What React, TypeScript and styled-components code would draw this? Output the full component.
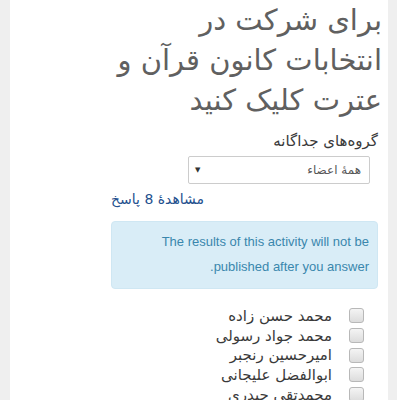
import React from "react";
import styled, { createGlobalStyle } from "styled-components";

const Global = createGlobalStyle`
  html, body {
    margin: 0;
    padding: 0;
    background: #efefef;
  }
  body {
    font-family: "DejaVu Sans", "Liberation Sans", sans-serif;
  }
`;

const Page = styled.div`
  margin: 0 9px 0 10px;
  min-height: 400px;
  background: #ffffff;
  direction: rtl;
  overflow: hidden;
`;

const Title = styled.h2`
  margin: 0;
  padding: 0 6px 0 0;
  font-family: "DejaVu Sans", sans-serif;
  font-weight: normal;
  font-size: 29px;
  line-height: 40px;
  color: #606060;
  text-align: right;
`;

const Body = styled.div`
  padding: 10px 10px 0 101px;
`;

const GroupLabel = styled.div`
  font-size: 15px;
  line-height: 22px;
  color: #3a3a3a;
`;

const SelectBox = styled.div`
  margin: 4px 8px 0 0;
  width: 182px;
  height: 28px;
  box-sizing: border-box;
  border: 1px solid #cccccc;
  border-radius: 2px;
  background: #ffffff;
  display: flex;
  align-items: center;
  justify-content: space-between;
  padding: 0 8px 0 6px;
  font-size: 12px;
  color: #555555;
`;

const Arrow = styled.span`
  font-size: 7px;
  color: #333333;
`;

const ResponsesLink = styled.a`
  display: block;
  margin-top: 5px;
  text-align: left;
  font-size: 14px;
  line-height: 20px;
  color: #23508e;
  text-decoration: none;
`;

const Alert = styled.div`
  margin-top: 12px;
  padding: 7px 8px 9px 10px;
  background: #d9edf7;
  border: 1px solid #cfe7f3;
  border-radius: 4px;
  color: #3a87ad;
  font-family: "Liberation Sans", Arial, sans-serif;
  font-size: 13px;
  line-height: 25px;
  text-align: right;
`;

const Options = styled.ul`
  list-style: none;
  margin: 17px 14px 0 0;
  padding: 0;
`;

const Option = styled.li`
  display: flex;
  align-items: center;
  gap: 17px;
  height: 19.7px;
  font-size: 15px;
  color: #3a3a3a;
`;

const Box = styled.span`
  width: 13px;
  height: 13px;
  flex: none;
  border: 1px solid #b8b8b8;
  border-radius: 3px;
  background: linear-gradient(#f4f4f4, #dcdcdc);
`;

const names = [
  "محمد حسن زاده",
  "محمد جواد رسولی",
  "امیرحسین رنجبر",
  "ابوالفضل علیجانی",
  "محمدتقی حیدری",
];

export default function App() {
  return (
    <>
      <Global />
      <Page>
        <Title>
          برای شرکت در
          <br />
          انتخابات کانون قرآن و
          <br />
          عترت کلیک کنید
        </Title>
        <Body>
          <GroupLabel>گروه‌های جداگانه</GroupLabel>
          <SelectBox>
            <span>همهٔ اعضاء</span>
            <Arrow>▼</Arrow>
          </SelectBox>
          <ResponsesLink href="#">مشاهدهٔ 8 پاسخ</ResponsesLink>
          <Alert>
            The results of this activity will not be
            <br />
            published after you answer.
          </Alert>
          <Options>
            {names.map((n) => (
              <Option key={n}>
                <Box />
                <span>{n}</span>
              </Option>
            ))}
          </Options>
        </Body>
      </Page>
    </>
  );
}
